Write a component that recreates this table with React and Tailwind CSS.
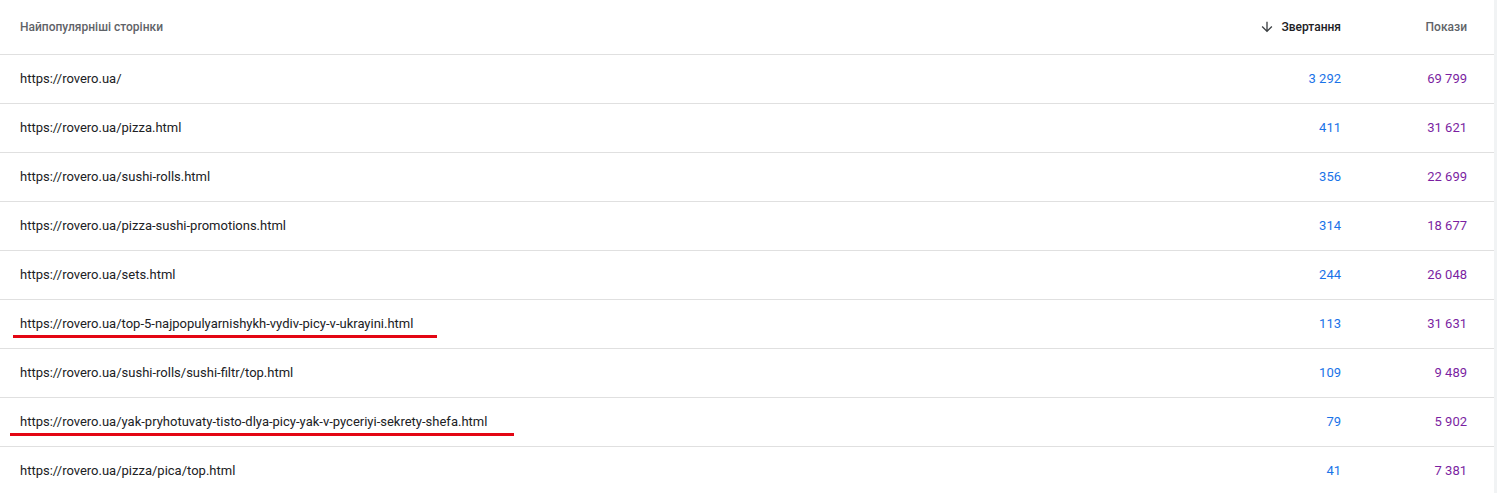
const ROWS = [
  { url: 'https://rovero.ua/', clicks: '3 292', views: '69 799' },
  { url: 'https://rovero.ua/pizza.html', clicks: '411', views: '31 621' },
  { url: 'https://rovero.ua/sushi-rolls.html', clicks: '356', views: '22 699' },
  { url: 'https://rovero.ua/pizza-sushi-promotions.html', clicks: '314', views: '18 677' },
  { url: 'https://rovero.ua/sets.html', clicks: '244', views: '26 048' },
  { url: 'https://rovero.ua/top-5-najpopulyarnishykh-vydiv-picy-v-ukrayini.html', clicks: '113', views: '31 631', mark: 'w-[424px] ml-[13px]' },
  { url: 'https://rovero.ua/sushi-rolls/sushi-filtr/top.html', clicks: '109', views: '9 489' },
  { url: 'https://rovero.ua/yak-pryhotuvaty-tisto-dlya-picy-yak-v-pyceriyi-sekrety-shefa.html', clicks: '79', views: '5 902', mark: 'w-[504px] ml-[10px]' },
  { url: 'https://rovero.ua/pizza/pica/top.html', clicks: '41', views: '7 381' },
]

function ArrowDown() {
  return (
    <svg width="16" height="16" viewBox="0 0 24 24" className="fill-[#3c4043]">
      <path d="M20 12l-1.41-1.41L13 16.17V4h-2v12.17l-5.58-5.59L4 12l8 8 8-8z" />
    </svg>
  )
}

export default function App() {
  return (
    <div className="w-[1497px] h-[493px] overflow-hidden bg-white flex font-['Roboto',sans-serif]">
      <div className="w-[1494px]">
        <div className="h-[55px] flex items-center border-b border-[#e0e0e0] text-[12px] font-medium pr-[27px]">
          <div className="flex-1 pl-5 text-[#5f6368]">Найпопулярніші сторінки</div>
          <div className="w-[200px] flex justify-end items-center gap-[6px] text-[#202124]">
            <ArrowDown />
            <span>Звертання</span>
          </div>
          <div className="w-[126px] text-right text-[#5f6368]">Покази</div>
        </div>
        {ROWS.map(r => (
          <div key={r.url} className="relative h-[49px] flex items-center border-b border-[#e0e0e0] text-[13px] pr-[27px]">
            <div className="flex-1 pl-5 text-[#202124]">{r.url}</div>
            <div className="w-[200px] text-right text-[#1a73e8]">{r.clicks}</div>
            <div className="w-[126px] text-right text-[#7b1fa2]">{r.views}</div>
            {r.mark && <div className={`absolute left-0 top-[35px] h-[3px] bg-[#e30613] ${r.mark}`} />}
          </div>
        ))}
      </div>
      <div className="w-[3px] bg-[#f1f3f4]" />
    </div>
  )
}
